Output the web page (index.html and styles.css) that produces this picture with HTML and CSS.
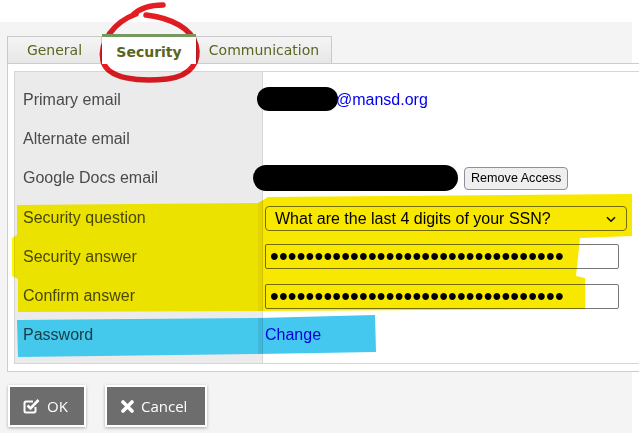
FILE: index.html
```html
<!DOCTYPE html>
<html lang="en">
<head>
    <meta charset="UTF-8">
    <title>Account Settings</title>
    <link rel="stylesheet" href="styles.css">
</head>
<body>
    <div class="page">
        <div class="tabs">
            <div class="tab tab-general">General</div>
            <div class="tab tab-security active">Security</div>
            <div class="tab tab-communication">Communication</div>
        </div>

        <div class="panel">
            <div class="form">
                <div class="label">Primary email</div>
                <div class="value"><span class="redact redact-email"></span><a class="link email">@mansd.org</a></div>

                <div class="label">Alternate email</div>
                <div class="value"></div>

                <div class="label">Google Docs email</div>
                <div class="value"><span class="redact redact-docs"></span><button class="small-button">Remove Access</button></div>

                <div class="label">Security question</div>
                <div class="value">
                    <div class="select-wrap">
                        <select class="select">
                            <option>What are the last 4 digits of your SSN?</option>
                        </select>
                        <svg class="chevron" width="10" height="7" viewBox="0 0 10 7"><path d="M1 1.2 L5 5.2 L9 1.2" fill="none" stroke="#111" stroke-width="1.6"/></svg>
                    </div>
                </div>

                <div class="label">Security answer</div>
                <div class="value"><input class="field" type="password" value="abcdefghijklmnopqrstuvwxyz1234567"></div>

                <div class="label">Confirm answer</div>
                <div class="value"><input class="field" type="password" value="abcdefghijklmnopqrstuvwxyz1234567"></div>

                <div class="label">Password</div>
                <div class="value"><a class="link">Change</a></div>
            </div>
        </div>

        <div class="actions">
            <button class="btn btn-ok">
                <svg width="17" height="16" viewBox="0 0 17 16"><path d="M12.5 9v4a1.5 1.5 0 0 1-1.5 1.5H3A1.5 1.5 0 0 1 1.5 13V5A1.5 1.5 0 0 1 3 3.5h7" fill="none" stroke="#fff" stroke-width="2"/><path d="M4.5 7.5 L7.5 10.5 L15.5 2" fill="none" stroke="#fff" stroke-width="2.6"/></svg>
                OK
            </button>
            <button class="btn btn-cancel">
                <svg width="13" height="13" viewBox="0 0 13 13"><path d="M2 2 L11 11 M11 2 L2 11" stroke="#fff" stroke-width="3.6" stroke-linecap="round"/></svg>
                Cancel
            </button>
        </div>
    </div>

    <!-- marker annotations drawn over the screenshot -->
    <svg class="marks" width="639" height="433" viewBox="0 0 639 433">
        <path class="mark-yellow-light" d="M17 205 L258 203 L258 311 L18 312 L18 279 L12 276 L12 238 L17 235 Z"/>
        <path class="mark-yellow" d="M258 203 L268 197 L632 194 L632 236 L580 238 L576 276 L585 278 L585 309 L258 311 Z"/>
        <path class="mark-blue-light" d="M17 320 L258 318 L258 354 L18 357 Z"/>
        <path class="mark-blue" d="M258 318 L375 315 L376 352 L258 354 Z"/>
        <path class="mark-red" d="M163 5 C150 5 139 9 133 15 M136 14 C114 22 99 42 103 61 C107 79 140 82 167 79 C192 76 200 61 196 45 C192 29 172 18 146 15"/>
    </svg>
</body>
</html>
```

FILE: styles.css
```css
body {
    margin: 0;
    background: #fff;
    font-family: "Liberation Sans", Arial, sans-serif;
    overflow: hidden;
}
.page {
    margin-top: 22px;
    width: 632px;
    height: 411px;
    padding-top: 12px;
    box-sizing: border-box;
    background: #f4f4f4;
}
.tabs {
    display: flex;
    align-items: flex-end;
    height: 29px;
    padding-left: 7px;
}
.tab {
    box-sizing: border-box;
    height: 27px;
    border: 1px solid #c9c9c9;
    border-bottom: none;
    background: linear-gradient(#f4f4f4, #e7e7e7);
    font: 14px "DejaVu Sans", Verdana, sans-serif;
    color: #5b6421;
    display: flex;
    align-items: center;
    justify-content: center;
}
.tab-general { width: 95px; }
.tab-security { width: 94px; }
.tab-communication { width: 136px; }
.tab.active {
    position: relative;
    z-index: 1;
    height: 30px;
    margin-bottom: -1px;
    padding-top: 2px;
    border: none;
    border-top: 3px solid #74985e;
    background: #fff;
    font-weight: bold;
}
.panel {
    width: 650px;
    margin-left: 7px;
    padding: 7px 0 7px 6px;
    border: 1px solid #cdcdcd;
    background: #fff;
}
.form {
    display: grid;
    grid-template-columns: 248px 1fr;
    grid-auto-rows: 39.3px;
    width: 640px;
    padding: 8px 0 8px;
    border: 1px solid #d6d6d6;
    background: linear-gradient(90deg, #ebebeb 247px, #d6d6d6 247px, #d6d6d6 248px, #fff 248px);
}
.label {
    display: flex;
    align-items: center;
    padding-left: 8px;
    font-size: 16px;
    color: #4a4a4a;
}
.value {
    display: flex;
    align-items: center;
    padding-left: 2px;
    font-size: 16px;
}
.link {
    color: #0000ee;
    text-decoration: none;
}
.email { margin-left: -2px; }
.redact {
    display: inline-block;
    background: #000;
    border-radius: 13px;
}
.redact-email {
    width: 81px;
    height: 24px;
    margin-left: -8px;
    margin-top: -2px;
}
.redact-docs {
    width: 205px;
    height: 26px;
    margin-left: -12px;
}
.small-button {
    margin-left: 6px;
    height: 23px;
    padding: 0 6px;
    border: 1px solid #8f8f9d;
    border-radius: 4px;
    background: #efefef;
    font: 12.6px "Liberation Sans", Arial, sans-serif;
    color: #000;
}
.select-wrap {
    position: relative;
    margin-top: 2px;
}
.select {
    appearance: none;
    width: 362px;
    height: 25px;
    padding: 0 0 0 9px;
    border: 1px solid #767676;
    border-radius: 4px;
    background: #fff;
    font: 16px "Liberation Sans", Arial, sans-serif;
    color: #000;
}
.chevron {
    position: absolute;
    right: 11px;
    top: 10px;
}
.field {
    box-sizing: border-box;
    width: 354px;
    height: 25px;
    padding: 0 0 0 4px;
    border: 1px solid #767676;
    border-radius: 2px;
    font: 25px "Liberation Sans", Arial, sans-serif;
    letter-spacing: 0.15px;
    color: #000;
}
.actions {
    display: flex;
    gap: 19px;
    padding: 13px 0 0 8px;
}
.btn {
    display: flex;
    align-items: center;
    gap: 7px;
    height: 42px;
    padding: 0 0 0 13px;
    border: 2px solid #fff;
    background: #6d6d6d;
    box-shadow: 0 1px 3px rgba(0,0,0,0.3);
    color: #fff;
    font: 15px "Open Sans", "Liberation Sans", sans-serif;
}
.btn-ok { width: 78px; }
.btn-cancel { width: 102px; padding-left: 14px; }
.marks {
    position: absolute;
    top: 0;
    left: 0;
    pointer-events: none;
    mix-blend-mode: multiply;
}
.mark-yellow { fill: #f8e800; }
.mark-yellow-light { fill: #fff600; }
.mark-blue { fill: #45c8ef; }
.mark-blue-light { fill: #4ad9ff; }
.mark-red {
    fill: none;
    stroke: #e31d22;
    stroke-width: 5.5;
    stroke-linecap: round;
}
```
